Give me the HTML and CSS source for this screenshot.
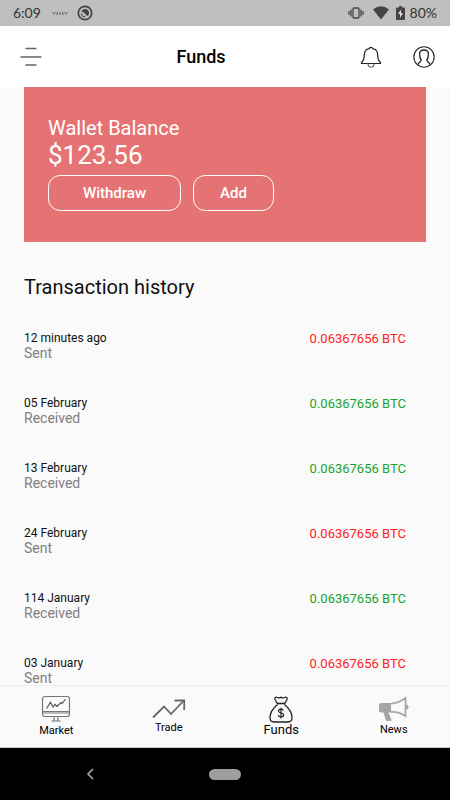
FILE: index.html
```html
<!DOCTYPE html>
<html lang="en">
<head>
<meta charset="utf-8">
<meta name="viewport" content="width=device-width, initial-scale=1">
<title>Funds</title>
<link rel="stylesheet" href="styles.css">
</head>
<body>
<div class="status">
  <span>6:09</span>
  <svg class="status-note" width="18" height="6" viewBox="0 0 18 6" fill="none" stroke="#555"><path d="M1 2.5h16" stroke-dasharray="1 1.5"/><path d="M2 4h14" stroke-dasharray="2 1"/></svg>
  <svg width="16" height="16" viewBox="0 0 16 16" fill="none" stroke="#444"><circle cx="8" cy="8" r="6.7" stroke-width="1.7"/><path d="M4.300 8.500a3.800 3.800 0 0 0 4 3.500" stroke-width="1"/><path d="M4.500 6.200C6.500 3 11 3.500 12 7c.3 1.500-.2 2.800-.8 3.800C9.500 10.800 8.800 10 8.300 9 7.500 7.500 6 7.500 4.500 6.200z" fill="#444" stroke="none"/></svg>
  <div class="status-right">
    <svg width="16" height="12" viewBox="0 0 16 12" fill="none" stroke="#444" stroke-width="1.300"><rect x="5" y="1" width="6" height="10" rx="1"/><path d="M3 2.500v7M1 4v4M13 2.500v7M15 4v4"/></svg>
    <svg class="wifi" width="16" height="14" viewBox="0 0 16 14"><path d="M0 3.500Q8-3 16 3.500L8 13.500z" fill="#444"/></svg>
    <svg width="9" height="14" viewBox="0 0 9 14"><path d="M3 0h3v1.500h2q1 0 1 1V13q0 1-1 1H1q-1 0-1-1V2.500q0-1 1-1h2z" fill="#444"/><path d="M5 3.500 2 8h2v4l3-5H5z" fill="#ddd"/></svg>
    <span>80%</span>
  </div>
</div>
<header class="bar">
  <button class="icon-btn" aria-label="Menu"><svg width="22" height="20" viewBox="0 0 22 20" stroke="#666" stroke-width="1.600"><path d="M5.500 1.500h11M.5 10h21M5.500 18h11"/></svg></button>
  <h1>Funds</h1>
  <div class="bar-actions">
    <button class="icon-btn" aria-label="Notifications"><svg width="22" height="22" viewBox="0 0 22 22" fill="none" stroke="#222" stroke-width="1.200"><path d="M1.500 16.500C5.500 13.500 3.500 9 5 5.500 6 3.300 8 2.800 9.300 2.600c.2-1.700 3.200-1.700 3.400 0 1.300.2 3.300.7 4.300 2.900 1.500 3.500-.5 8 3.500 11 .4.500.2 1-.5 1H2c-.7 0-.9-.5-.5-1z"/><path d="M8 17.500c.1 5 5.900 5 6 0" stroke="#666"/></svg></button>
    <button class="icon-btn" aria-label="Profile"><svg width="22" height="22" viewBox="0 0 22 22" fill="none" stroke="#222" stroke-width="1.100"><circle cx="11" cy="11" r="10.200"/><path d="M5 18.500c0-2.300 3.200-2.300 3.200-4.500C6.900 12.500 6.500 11 6.700 9 6 5.500 7.800 4 11 4s5 1.500 4.300 5c.2 2-.2 3.500-1.500 5 0 2.200 3.200 2.200 3.200 4.500" stroke-width="1.300"/></svg></button>
  </div>
</header>
<main>
  <section class="wallet">
    <h2>Wallet Balance</h2>
    <p class="balance">$123.56</p>
    <div class="wallet-actions"><button class="outline wide">Withdraw</button><button class="outline">Add</button></div>
  </section>
  <section class="history">
    <h2>Transaction history</h2>
    <ul>
      <li><div><p class="date">12 minutes ago</p><p class="kind">Sent</p></div><span class="amount out">0.06367656 BTC</span></li>
      <li><div><p class="date">05 February</p><p class="kind">Received</p></div><span class="amount in">0.06367656 BTC</span></li>
      <li><div><p class="date">13 February</p><p class="kind">Received</p></div><span class="amount in">0.06367656 BTC</span></li>
      <li><div><p class="date">24 February</p><p class="kind">Sent</p></div><span class="amount out">0.06367656 BTC</span></li>
      <li><div><p class="date">114 January</p><p class="kind">Received</p></div><span class="amount in">0.06367656 BTC</span></li>
      <li><div><p class="date">03 January</p><p class="kind">Sent</p></div><span class="amount out">0.06367656 BTC</span></li>
    </ul>
  </section>
</main>
<nav class="tabs">
  <a href="#market"><svg width="30" height="28" viewBox="0 0 30 28" fill="none" stroke="#777" stroke-width="1.200"><rect x="1.500" y="1.500" width="27" height="20" rx="2.500"/><path d="M1.500 16.500h27M1.500 18h27"/><path d="M13 21.500v4M17 21.500v4M10.500 26h9"/><path d="M5.500 13.500 9.500 7.500l2.500 4.500 2-2.500 2 2 4-4 1 1 3.500-4.500" stroke="#555"/></svg><span>Market</span></a>
  <a href="#trade"><svg width="34" height="22" viewBox="0 0 34 22" fill="none" stroke="#666" stroke-width="1.800"><path d="M1 19.500 12 8.500l7 7.500L31.500 3"/><path d="M22.500 2.500h9.700v9.500"/></svg><span>Trade</span></a>
  <a href="#funds" class="active" aria-current="page"><svg width="24" height="27" viewBox="0 0 24 27" fill="none" stroke="#222" stroke-width="1.300"><path d="M8.500 8 6 3.500c-.8-2 .8-2.700 2.500-2 1.500.8 2 .5 3.500-.2 1.500.7 2 1 3.500.2 1.700-.7 3.300 0 2.500 2L15.500 8"/><path d="M8 7.500h8" stroke-width="1.600"/><path d="M8.500 8.500C5.500 11 1 15.500 1 21.500 1 24 2 26 5 26h14c3 0 4-2 4-4.500 0-6-4.500-10.500-7.500-13"/><path d="M14.500 14.500c-.5-1-1.300-1.300-2.500-1.300-1.500 0-2.500.7-2.500 1.900 0 2.500 5.200 1.300 5.200 3.900 0 1.200-1 1.900-2.700 1.900-1.500 0-2.500-.6-2.700-1.700M12 11.700v10.700" stroke-width="1.200"/></svg><span>Funds</span></a>
  <a href="#news"><svg width="30" height="26" viewBox="0 0 30 26"><path d="M2 7h10v9.500H9.500l3 7.500q.3 1-1 1H8q-1 0-1.300-1L4.500 16.500H2q-2 0-2-2V9q0-2 2-2z" fill="#a5a5a5"/><path d="M12 7.500q7 0 14.500-5.500v18Q19 15.500 12 16" fill="none" stroke="#a5a5a5" stroke-width="1.700"/><path d="M27 8.500q2.500 0 2.500 2.500T27 13.500z" fill="#a5a5a5"/></svg><span>News</span></a>
</nav>
<div class="system">
  <button aria-label="Back"><svg width="8" height="12" viewBox="0 0 8 12" fill="none" stroke="#aaa" stroke-width="1.600"><path d="M7 1 2 6l5 5"/></svg></button>
  <button class="pill" aria-label="Home"></button>
</div>
</body>
</html>
```
FILE: styles.css
```css
* { box-sizing: border-box; margin: 0; padding: 0; }
body { display: flex; flex-direction: column; height: 100vh; background: #fafafa; color: #111; font-family: Roboto, "Liberation Sans", sans-serif; }
button { background: none; border: 0; font: inherit; color: inherit; }
svg { display: block; flex: none; }
a { color: inherit; text-decoration: none; }
ul { list-style: none; }

.status { display: flex; align-items: center; gap: 8px; height: 26px; flex: none; padding: 0 13px; background: #bfbfbf; color: #333; font-family: Lato, Roboto, sans-serif; font-size: 14px; line-height: 26px; }
.status-note { margin-left: 2px; }
.status-note + svg { margin-right: auto; }
.status-right { display: flex; align-items: center; gap: 5px; }
.wifi { margin: 0 2px 0 4px; }

.bar { display: flex; justify-content: space-between; align-items: center; height: 61px; flex: none; padding: 0 15px 0 20px; background: #fff; }
.bar h1 { font-size: 18px; line-height: 24px; font-weight: 500; color: #000; }
.bar-actions { display: flex; gap: 31px; }

main { flex: 1; min-height: 0; overflow: hidden; padding: 0 24px; }
.wallet { padding: 28px 24px 31px; background: #e57373; color: #fff; }
.wallet h2 { font-size: 20px; line-height: 26px; font-weight: 400; }
.balance { font-size: 26px; line-height: 28px; }
.wallet-actions { display: flex; gap: 12px; margin-top: 6px; }
.outline { height: 36px; padding: 0 26px; border: 1px solid #fff; border-radius: 12px; font-size: 15px; font-weight: 500; }
.wide { padding: 0 34px; }

.history h2 { margin: 32px 0 31px; font-size: 20px; line-height: 26px; font-weight: 400; }
.history li { display: flex; justify-content: space-between; align-items: flex-start; height: 65px; padding-right: 20px; line-height: 16px; }
.date { font-size: 12px; line-height: 14px; }
.kind { font-size: 14px; color: #808080; }
.amount { font-size: 13px; }
.out { color: #f22; }
.in { color: #1ba330; }

.tabs { display: grid; grid-template-columns: repeat(4, 1fr); height: 63px; flex: none; border-top: 1px solid #eee; border-bottom: 1px solid #ccc; background: #fafafa; color: #000; font-size: 11px; line-height: 14px; }
.tabs a { display: flex; flex-direction: column; align-items: center; justify-content: center; gap: 1px; }
.tabs .active { gap: 0; font-size: 13px; }

.system { display: grid; grid-template-columns: 2fr 1fr 2fr; align-items: center; height: 52px; flex: none; background: #000; }
.system button { justify-self: center; }
.system .pill { width: 32px; height: 11px; border-radius: 6px; background: #9e9e9e; }
```
